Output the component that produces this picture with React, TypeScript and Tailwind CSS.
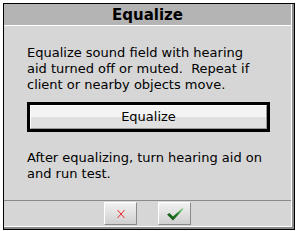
import React from 'react';

function XIcon() {
  return (
    <svg width="10" height="10" viewBox="0 0 10 10">
      <path d="M1.5 1 L8.5 9 M8.5 1 L1.5 9" stroke="#ee2a2e" strokeWidth="1" fill="none" />
    </svg>
  );
}

function CheckIcon() {
  return (
    <svg width="18" height="14" viewBox="0 0 18 14">
      <defs>
        <linearGradient id="chk" x1="0" y1="1" x2="1" y2="0">
          <stop offset="0" stopColor="#0d4d10" />
          <stop offset="0.55" stopColor="#1f7a22" />
          <stop offset="1" stopColor="#9be09a" />
        </linearGradient>
      </defs>
      <path d="M1 7.5 L3.5 6 L7 9.5 L16.5 1 L17.5 2 L7 13.5 Z" fill="url(#chk)" />
    </svg>
  );
}

function FooterButton({ children }: { children: React.ReactNode }) {
  return (
    <button className="w-[33px] h-[23px] flex items-center justify-center border border-t-white border-l-white border-r-[#8a8a8a] border-b-[#8a8a8a] bg-gradient-to-b from-[#f2f2f2] to-[#cfcfcf]">
      {children}
    </button>
  );
}

export default function App() {
  return (
    <div className="w-[297px] h-[231px] bg-white pt-[3px] pl-[3px]" style={{ fontFamily: '"DejaVu Sans", sans-serif' }}>
      <div className="w-[292px] h-[227px] border border-black flex flex-col">
        <div className="flex-1 flex flex-col border-r-2 border-b-2 border-[#8a8a8a]">
          <div className="flex-1 flex flex-col border-r border-b border-white bg-[#d6d6d6]">
            {/* Title */}
            <div className="h-[22px] bg-[#b4b4b4] border-b border-white flex items-center justify-center">
              <span className="text-[15px] font-bold text-black leading-none pt-px">Equalize</span>
            </div>

            {/* Body */}
            <div className="flex-1 pl-[23px] pr-[20px] pt-[19px] text-[13px] leading-[16px] text-black">
              <p className="whitespace-pre-line">
                {'Equalize sound field with hearing\naid turned off or muted.\u00a0 Repeat if\nclient or nearby objects move.'}
              </p>
              <button className="mt-[9px] w-[243px] h-[30px] border-[3px] border-black flex flex-col">
                <div className="flex-1 flex flex-col border-t border-l border-white border-r border-b border-r-[#9a9a9a] border-b-[#9a9a9a] relative">
                  <div className="h-1/2 bg-[#f3f3f3]" />
                  <div className="h-1/2 bg-[#e0e0e0]" />
                  <span className="absolute inset-0 flex items-center justify-center text-[13px] text-black">Equalize</span>
                </div>
              </button>
              <p className="mt-[18px] whitespace-pre-line">
                {'After equalizing, turn hearing aid on\nand run test.'}
              </p>
            </div>

            {/* Footer */}
            <div className="h-[26px] border-t border-[#8a8a8a] flex items-center justify-center gap-[21px]">
              <FooterButton><XIcon /></FooterButton>
              <FooterButton><CheckIcon /></FooterButton>
            </div>
          </div>
        </div>
      </div>
    </div>
  );
}
